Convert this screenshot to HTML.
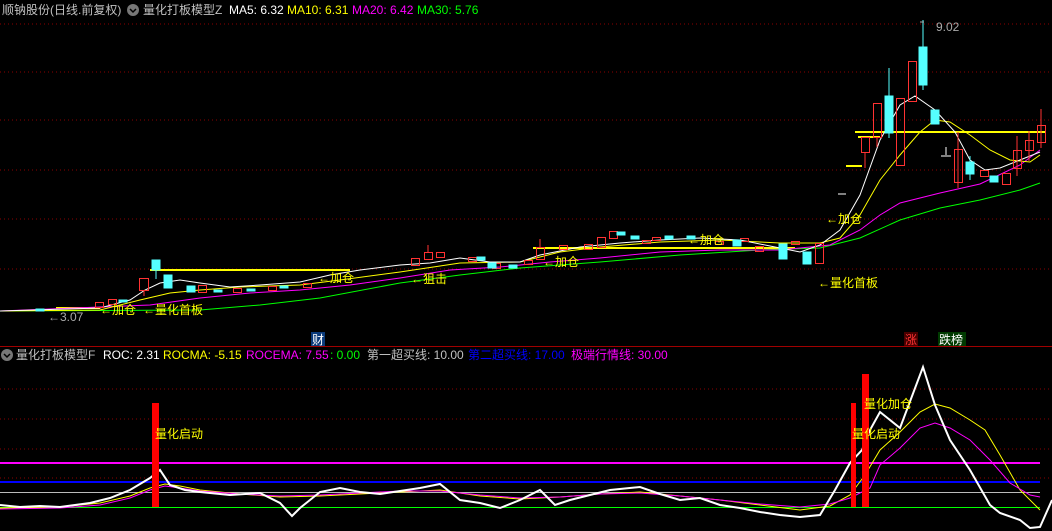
<!DOCTYPE html>
<html><head><meta charset="utf-8"><style>
html,body{margin:0;padding:0;background:#000;width:1052px;height:531px;overflow:hidden}
svg{display:block}
text{font-family:"Liberation Sans","Noto Sans CJK SC",sans-serif;font-size:12px}
</style></head><body>
<svg width="1052" height="531" viewBox="0 0 1052 531" xmlns="http://www.w3.org/2000/svg">
<rect width="1052" height="531" fill="#000"/>
<g stroke="#8b0000" stroke-dasharray="1,3" stroke-width="1">
<line x1="0" y1="24" x2="1052" y2="24"/><line x1="0" y1="72" x2="1052" y2="72"/>
<line x1="0" y1="120" x2="1052" y2="120"/><line x1="0" y1="170" x2="1052" y2="170"/>
<line x1="0" y1="219" x2="1052" y2="219"/><line x1="0" y1="269" x2="1052" y2="269"/>
<line x1="0" y1="389" x2="1052" y2="389"/><line x1="0" y1="419" x2="1052" y2="419"/>
<line x1="0" y1="449" x2="1052" y2="449"/><line x1="0" y1="478" x2="1052" y2="478"/>
</g>
<line x1="0" y1="346.5" x2="1052" y2="346.5" stroke="#a00000" stroke-width="1"/>
<text x="2" y="14" fill="#c0c0c0">顺钠股份(日线.前复权)</text>
<circle cx="133" cy="10" r="6" fill="#777"/><path d="M130 9l3 3 3-3" stroke="#000" stroke-width="1.5" fill="none"/>
<text x="143" y="14" fill="#c0c0c0">量化打板模型Z</text>
<text x="229" y="14" fill="#fff">MA5: 6.32</text>
<text x="287" y="14" fill="#ff0">MA10: 6.31</text>
<text x="352" y="14" fill="#f0f">MA20: 6.42</text>
<text x="417" y="14" fill="#0f0">MA30: 5.76</text>
<g stroke="#ff0" stroke-width="2">
<line x1="150" y1="270" x2="350" y2="270"/><line x1="56" y1="308" x2="100" y2="308"/>
<line x1="533" y1="248" x2="795" y2="248"/><line x1="855" y1="132" x2="1046" y2="132"/>
<line x1="858" y1="137" x2="880" y2="137"/><line x1="846" y1="166" x2="862" y2="166"/>
</g>
<g fill="none" stroke-width="1">
<polyline stroke="#0f0" points="0,311 200,310 260,305 320,298 400,283 460,275 520,268 600,262 680,255 760,250 820,248 860,238 900,220 940,208 980,200 1020,190 1040,183"/>
<polyline stroke="#f0f" points="0,311 150,305 200,298 250,293 300,290 350,285 400,278 450,270 500,267 550,262 600,258 660,252 720,250 780,250 830,245 860,230 880,215 900,203 940,193 980,184 1020,165 1040,150"/>
<polyline stroke="#ff0" points="0,311 100,310 140,300 170,293 200,290 240,287 300,285 340,280 400,272 460,263 520,262 560,252 600,247 660,242 720,240 780,243 820,243 840,238 860,215 880,180 900,155 920,132 935,120 950,122 970,135 990,150 1010,160 1030,162 1040,155"/>
<polyline stroke="#fff" points="0,311 100,308 130,300 145,290 160,283 180,280 200,283 230,287 260,285 300,282 330,275 360,270 400,265 430,263 460,258 490,262 520,262 540,255 580,247 620,243 660,240 700,238 740,240 780,248 800,252 820,245 840,230 860,195 880,140 900,105 915,96 935,110 955,132 970,160 985,170 1000,168 1020,160 1040,152"/>
</g>
<g stroke-width="1">
<g stroke="#ff3232" fill="none">
<rect x="95.5" y="302.5" width="8" height="5"/><rect x="108.5" y="299.5" width="8" height="5"/>
<rect x="139.5" y="278.5" width="9" height="12"/><line x1="144" y1="290" x2="144" y2="296"/>
<rect x="198.5" y="285.5" width="8" height="7"/><rect x="233.5" y="288.5" width="8" height="4"/>
<rect x="268.5" y="286.5" width="8" height="4"/><rect x="303.5" y="283.5" width="8" height="4"/>
<rect x="411.5" y="258.5" width="8" height="7"/><rect x="424.5" y="252.5" width="8" height="7"/><line x1="428" y1="245" x2="428" y2="252"/>
<rect x="436.5" y="252.5" width="8" height="5"/>
<rect x="468.5" y="257.5" width="8" height="4"/><rect x="492.5" y="263.5" width="8" height="5"/>
<rect x="524.5" y="260.5" width="8" height="4"/>
<rect x="536.5" y="247.5" width="8" height="12"/><line x1="540" y1="239" x2="540" y2="247"/>
<rect x="559.5" y="245.5" width="8" height="4"/><rect x="584.5" y="244.5" width="8" height="5"/>
<rect x="597.5" y="237.5" width="8" height="10"/><rect x="609.5" y="231.5" width="8" height="7"/>
<rect x="642.5" y="240.5" width="8" height="3"/><rect x="652.5" y="237.5" width="8" height="3"/>
<rect x="715.5" y="241.5" width="8" height="3"/><rect x="740.5" y="238.5" width="8" height="3"/>
<rect x="755.5" y="246.5" width="8" height="5"/><rect x="791.5" y="241.5" width="8" height="3"/>
<rect x="815.5" y="243.5" width="8" height="20"/>
<rect x="861.5" y="137.5" width="8" height="15"/><line x1="865" y1="152" x2="865" y2="168"/>
<rect x="873.5" y="103.5" width="8" height="34"/><line x1="877" y1="137" x2="877" y2="147"/>
<rect x="896.5" y="98.5" width="8" height="67"/>
<rect x="908.5" y="61.5" width="8" height="40"/>
<rect x="954.5" y="149.5" width="8" height="33"/><line x1="958" y1="132" x2="958" y2="188"/>
<rect x="980.5" y="170.5" width="8" height="6"/>
<rect x="1002.5" y="173.5" width="8" height="11"/>
<rect x="1013.5" y="150.5" width="8" height="18"/><line x1="1017" y1="136" x2="1017" y2="176"/>
<rect x="1025.5" y="140.5" width="8" height="10"/><line x1="1029" y1="131" x2="1029" y2="161"/>
<rect x="1037.5" y="125.5" width="8" height="17"/><line x1="1041" y1="109" x2="1041" y2="148"/>
</g>
<g fill="#5ff" stroke="#5ff">
<rect x="36" y="309" width="8" height="2"/><rect x="119" y="300" width="8" height="2"/>
<rect x="152" y="260" width="8" height="10"/><line x1="156" y1="270" x2="156" y2="279"/>
<rect x="164" y="275" width="8" height="13"/><rect x="187" y="286" width="8" height="6"/>
<rect x="214" y="290" width="8" height="2"/><rect x="247" y="289" width="8" height="2"/>
<rect x="280" y="286" width="8" height="2"/>
<rect x="477" y="257" width="8" height="3"/><rect x="488" y="263" width="8" height="5"/>
<rect x="509" y="265" width="8" height="3"/>
<rect x="617" y="232" width="8" height="3"/><rect x="631" y="236" width="8" height="3"/>
<rect x="665" y="236" width="8" height="3"/><rect x="687" y="236" width="8" height="3"/>
<rect x="733" y="240" width="8" height="6"/>
<rect x="779" y="244" width="8" height="15"/><rect x="803" y="252" width="8" height="12"/>
<rect x="885" y="96" width="8" height="37"/><line x1="889" y1="68" x2="889" y2="138"/>
<rect x="919" y="47" width="8" height="38"/><line x1="923" y1="20" x2="923" y2="90"/>
<rect x="931" y="110" width="8" height="14"/>
<rect x="966" y="162" width="8" height="12"/><line x1="970" y1="156" x2="970" y2="180"/>
<rect x="990" y="176" width="8" height="6"/>
</g>
<path d="M946 147v8M941 156h10" stroke="#fff" fill="none"/>
<line x1="838" y1="194" x2="846" y2="194" stroke="#fff"/>
</g>
<text x="48" y="321" fill="#aaa">←3.07</text>
<text x="100" y="314" fill="#ff0">←加仓</text>
<text x="143" y="314" fill="#ff0">←量化首板</text>
<text x="318" y="282" fill="#ff0">←加仓</text>
<text x="411" y="283" fill="#ff0">←狙击</text>
<text x="543" y="266" fill="#ff0">←加仓</text>
<text x="688" y="244" fill="#ff0">←加仓</text>
<text x="826" y="223" fill="#ff0">←加仓</text>
<text x="818" y="287" fill="#ff0">←量化首板</text>
<path d="M924 22h-4" stroke="#aaa"/><text x="936" y="31" fill="#aaa">9.02</text>
<rect x="311" y="332" width="14" height="14" fill="#0a3a7a"/><text x="312" y="344" fill="#fff">财</text>
<rect x="904" y="332" width="14" height="14" fill="#4a0000"/><text x="905" y="344" fill="#f33">涨</text>
<rect x="938" y="332" width="28" height="14" fill="#003a00"/><text x="939" y="344" fill="#fff">跌榜</text>
<circle cx="7" cy="355" r="6" fill="#777"/><path d="M4 354l3 3 3-3" stroke="#000" stroke-width="1.5" fill="none"/>
<text x="16" y="359" fill="#c0c0c0">量化打板模型F</text>
<text x="103" y="359" fill="#fff">ROC: 2.31</text>
<text x="163" y="359" fill="#ff0">ROCMA: -5.15</text>
<text x="246" y="359" fill="#f0f">ROCEMA: 7.55</text>
<text x="330" y="359" fill="#0f0">: 0.00</text>
<text x="367" y="359" fill="#c0c0c0">第一超买线: 10.00</text>
<text x="468" y="359" fill="#00f">第二超买线: 17.00</text>
<text x="571" y="359" fill="#f0f">极端行情线: 30.00</text>
<g stroke-width="2">
<line x1="0" y1="463" x2="1040" y2="463" stroke="#f0f"/>
<line x1="0" y1="482" x2="1040" y2="482" stroke="#00f"/>
</g>
<line x1="0" y1="492.5" x2="1040" y2="492.5" stroke="#bbb"/>
<line x1="0" y1="507.5" x2="1040" y2="507.5" stroke="#0f0"/>
<g fill="none" stroke-width="1">
<polyline stroke="#ff0" points="0,508 60,507 100,503 130,496 150,488 165,484 180,486 200,490 240,494 280,497 320,496 360,494 400,492 440,490 480,496 520,499 560,497 600,494 640,492 680,496 720,500 760,505 800,510 830,506 850,495 865,475 880,450 900,432 920,412 935,404 950,408 970,420 985,430 1000,455 1020,490 1040,510"/>
<polyline stroke="#f0f" points="0,509 60,508 100,505 130,498 150,490 165,486 180,488 200,491 240,494 280,496 320,495 360,493 400,491 440,491 480,495 520,498 560,497 600,494 640,493 680,496 720,500 760,504 800,507 830,504 850,498 870,488 880,465 900,448 920,428 935,423 950,428 970,440 990,460 1010,483 1030,495 1040,497"/>
<polyline stroke="#fff" stroke-width="2" points="0,505 20,507 40,506 60,507 90,503 110,498 130,490 150,478 160,470 170,485 185,490 200,492 230,495 260,493 280,503 292,516 300,508 320,492 340,488 360,492 380,494 400,491 420,488 440,484 460,500 480,503 500,508 520,500 540,490 555,505 570,500 590,495 610,490 640,487 660,494 680,500 700,498 720,505 740,508 760,512 780,515 800,517 820,515 835,490 850,463 862,450 870,430 880,412 900,428 923,367 935,405 950,440 970,470 990,505 1000,513 1020,520 1030,528 1040,527 1052,500"/>
</g>
<g fill="#f00">
<rect x="152" y="403" width="7" height="104"/>
<rect x="851" y="403" width="5" height="104"/>
<rect x="862" y="374" width="7" height="133"/>
</g>
<text x="155" y="438" fill="#ff0">量化启动</text>
<text x="864" y="408" fill="#ff0">量化加仓</text>
<text x="852" y="438" fill="#ff0">量化启动</text>
</svg>
</body></html>
